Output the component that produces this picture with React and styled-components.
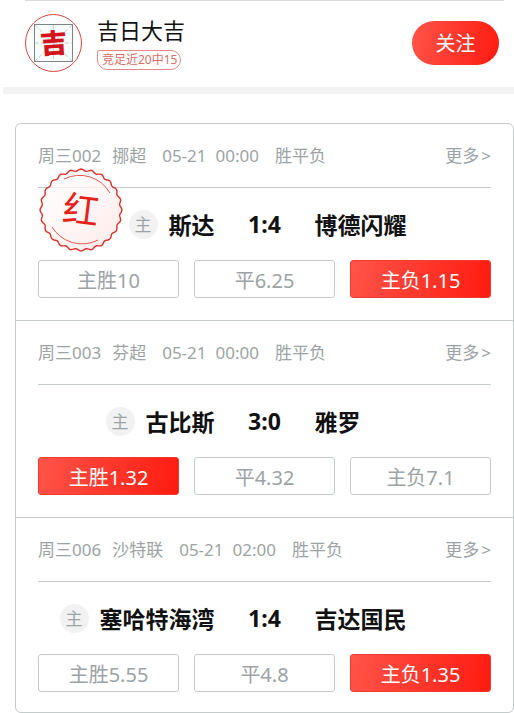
import React from "react";
import styled, { createGlobalStyle } from "styled-components";

const GlobalStyle = createGlobalStyle`
  * {
    box-sizing: border-box;
  }
  body {
    margin: 0;
    background-color: white;
    font-family: "Noto Sans", "Noto Sans CJK SC", sans-serif;
    color: #111;
  }
`;

const Header = styled.header`
  display: flex;
  align-items: center;
  height: 85px;
  margin: 0 10px 0 25px;
  padding: 0 5px 1px 0;
  border-top: 1px solid #dcdcdc;
`;
const Avatar = styled.svg`
  width: 57px;
  height: 58px;
  flex-shrink: 0;
`;
const Profile = styled.div`
  display: flex;
  flex-direction: column;
  align-items: flex-start;
  gap: 4px;
  margin-left: 15px;
  padding-bottom: 2px;
  flex: 1;
`;
const Name = styled.h1`
  margin: 0;
  font-size: 22px;
  font-weight: 400;
  line-height: 32px;
`;
const Record = styled.span`
  padding: 0 3px 0 4px;
  border: 1px solid #e58a86;
  border-radius: 2px 10px 10px 10px;
  font-size: 12px;
  line-height: 18px;
  color: #d96d68;
`;
const FollowBtn = styled.button`
  width: 87px;
  height: 44px;
  padding: 0;
  border: none;
  border-radius: 22px;
  background: linear-gradient(100deg, #ff5449, #ff1b10);
  color: white;
  font-family: inherit;
  font-size: 20px;
  cursor: pointer;
`;
const Divider = styled.div`
  height: 7px;
  margin: 2px 0 29px 3px;
  background-color: #f3f3f3;
`;

const MatchList = styled.main`
  margin-left: 15px;
  border: 1px solid #c5cacb;
  border-radius: 6px;
`;
const MatchItem = styled.article`
  position: relative;
  padding: 0 22px 22px;
  & + & {
    border-top: 1px solid #c5cacb;
  }
  &:last-child {
    padding-bottom: 20px;
  }
`;
const Meta = styled.div`
  display: flex;
  align-items: baseline;
  height: 64px;
  border-bottom: 1px solid #c5cacb;
  font-size: 17px;
  line-height: 64px;
  color: #9da3a5;
  white-space: nowrap;
`;
const League = styled.span`
  margin-left: 11px;
`;
const Kickoff = styled.time`
  display: flex;
  gap: 9px;
  margin: 0 16px;
`;
const MoreLink = styled.a`
  display: flex;
  gap: 2px;
  margin-left: auto;
  color: inherit;
  text-decoration: none;
`;

const Teams = styled.div`
  display: grid;
  grid-template-columns: 1fr 100px 1fr;
  align-items: center;
  height: 72px;
  font-size: 23px;
  font-weight: 700;
  white-space: nowrap;
`;
const Home = styled.div`
  display: flex;
  align-items: center;
  justify-content: flex-end;
  gap: 11px;
`;
const HomeMark = styled.span`
  width: 29px;
  height: 29px;
  border-radius: 50%;
  background-color: #f2f2f2;
  color: #9da3a5;
  font-size: 17px;
  font-weight: 400;
  line-height: 29px;
  text-align: center;
`;
const Score = styled.span`
  text-align: center;
`;

const Odds = styled.div`
  display: grid;
  grid-template-columns: repeat(3, 1fr);
  gap: 15px;
`;
const OddBtn = styled.button`
  height: 38px;
  padding: 3px 0 0;
  border: 1px solid ${(props) => (props.$hit ? "#ee3a30" : "#c5cacb")};
  border-radius: 3px;
  background: ${(props) =>
    props.$hit ? "linear-gradient(100deg, #ff5449, #ff1b10)" : "white"};
  color: ${(props) => (props.$hit ? "white" : "#9da3a5")};
  font-family: inherit;
  font-size: 20px;
  line-height: 32px;
  cursor: pointer;
`;
const Stamp = styled.svg`
  position: absolute;
  top: 43px;
  left: 22px;
  width: 86px;
  height: 86px;
`;

const matches = [
  {
    id: "周三002",
    league: "挪超",
    time: "00:00",
    home: "斯达",
    score: "1:4",
    away: "博德闪耀",
    odds: ["主胜10", "平6.25", "主负1.15"],
    hit: 2,
    red: true,
  },
  {
    id: "周三003",
    league: "芬超",
    time: "00:00",
    home: "古比斯",
    score: "3:0",
    away: "雅罗",
    odds: ["主胜1.32", "平4.32", "主负7.1"],
    hit: 0,
  },
  {
    id: "周三006",
    league: "沙特联",
    time: "02:00",
    home: "塞哈特海湾",
    score: "1:4",
    away: "吉达国民",
    odds: ["主胜5.55", "平4.8", "主负1.35"],
    hit: 2,
  },
];

// scalloped edge of the stamp
const wavyCircle = (center, radius, depth, waves) => {
  const points = [];
  for (let deg = 0; deg < 360; deg += 2) {
    const a = (deg * Math.PI) / 180;
    const r = radius + depth * Math.cos(a * waves);
    const x = center + r * Math.sin(a);
    const y = center - r * Math.cos(a);
    points.push(`${x.toFixed(1)} ${y.toFixed(1)}`);
  }
  return `M${points.join("L")}Z`;
};

const RedStamp = () => (
  <Stamp viewBox="0 0 86 86">
    <defs>
      <linearGradient id="stampFill" x1="0" y1="0" x2="1" y2="1">
        <stop offset="0" stopColor="#fff" stopOpacity="0.7" />
        <stop offset="1" stopColor="#ffe9e7" stopOpacity="0.9" />
      </linearGradient>
    </defs>
    <path
      d={wavyCircle(43, 40, 1, 24)}
      fill="url(#stampFill)"
      stroke="#d8322b"
      strokeWidth="1.4"
    />
    <path
      d="M26 12A35 35 0 0 1 72 26M14 60A35 35 0 0 0 60 73"
      fill="none"
      stroke="#e2564f"
      strokeWidth="1"
    />
    <text
      x="43"
      y="56"
      fontSize="36"
      fill="#e8201a"
      textAnchor="middle"
      transform="rotate(7 43 43)"
    >
      红
    </text>
  </Stamp>
);

const Match = ({ match }) => {
  return (
    <MatchItem>
      <Meta>
        <span>{match.id}</span>
        <League>{match.league}</League>
        <Kickoff>
          <span>05-21</span>
          <span>{match.time}</span>
        </Kickoff>
        <span>胜平负</span>
        <MoreLink href="#">
          <span>更多</span>
          <span>&gt;</span>
        </MoreLink>
      </Meta>
      <Teams>
        <Home>
          <HomeMark>主</HomeMark>
          <span>{match.home}</span>
        </Home>
        <Score>{match.score}</Score>
        <span>{match.away}</span>
      </Teams>
      <Odds>
        {match.odds.map((odd, i) => (
          <OddBtn key={odd} $hit={i === match.hit}>
            {odd}
          </OddBtn>
        ))}
      </Odds>
      {match.red && <RedStamp />}
    </MatchItem>
  );
};

const App = () => {
  return (
    <>
      <GlobalStyle />
      <Header>
        <Avatar viewBox="0 0 57 58">
          <ellipse cx="28.5" cy="29" rx="28" ry="28.5" fill="#fff" stroke="#d8453f" />
          <rect x="9.5" y="10.5" width="38" height="37" fill="#f7fbfa" stroke="#7d8586" />
          <path
            d="M10 11L47 47M47 11L10 47M28.5 11V47M10 29H47"
            stroke="#c9d0d0"
            strokeWidth="1"
            strokeDasharray="4 2"
          />
          <text
            x="28.5"
            y="39"
            fontSize="27"
            fontWeight="900"
            fill="#d4141c"
            textAnchor="middle"
            transform="rotate(-4 28.5 29)"
          >
            吉
          </text>
        </Avatar>
        <Profile>
          <Name>吉日大吉</Name>
          <Record>竞足近20中15</Record>
        </Profile>
        <FollowBtn>关注</FollowBtn>
      </Header>
      <Divider />
      <MatchList>
        {matches.map((match) => (
          <Match key={match.id} match={match} />
        ))}
      </MatchList>
    </>
  );
};

export default App;
